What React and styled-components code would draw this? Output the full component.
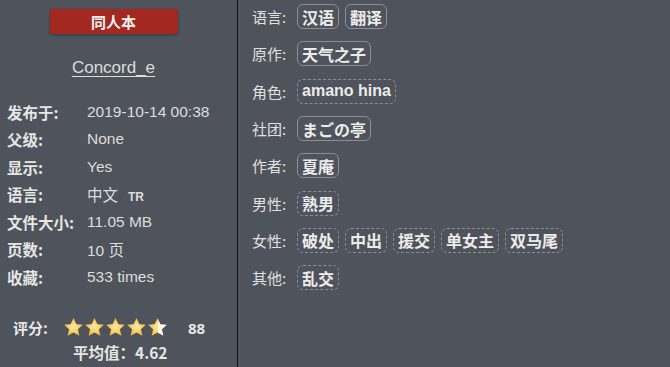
import React from "react";
import styled, { createGlobalStyle } from "styled-components";

const GlobalStyle = createGlobalStyle`
  html, body {
    margin: 0;
    padding: 0;
    background: #4f535b;
  }
  body {
    font-family: "Liberation Sans", "Noto Sans CJK SC", Arial, sans-serif;
    color: #dddddd;
  }
`;

const Page = styled.div`
  display: flex;
  width: 670px;
  height: 367px;
  background: #4f535b;
  overflow: hidden;
`;

const Side = styled.div`
  width: 227px;
  padding: 9px 10px 0 0;
  border-right: 1px solid #141414;
  display: flex;
  flex-direction: column;
  align-items: center;
`;

const Category = styled.div`
  width: 128px;
  height: 25px;
  background: #a3281f;
  border-radius: 2px;
  box-shadow: 0 1px 3px rgba(0, 0, 0, 0.35);
  display: flex;
  align-items: center;
  justify-content: center;
  color: #f2f2f2;
  font-weight: bold;
  font-size: 15px;
  font-family: "Noto Sans CJK SC", sans-serif;
`;

const Uploader = styled.a`
  margin-top: 24px;
  font-size: 17px;
  color: #dddddd;
  text-decoration: underline;
  text-underline-offset: 3px;
  font-family: "Liberation Sans", Arial, sans-serif;
`;

const InfoTable = styled.div`
  align-self: stretch;
  margin-top: 20px;
  padding-left: 7px;
  display: grid;
  grid-template-columns: 80px 1fr;
  grid-auto-rows: 27.5px;
  align-items: center;
`;

const InfoLabel = styled.div`
  font-size: 15.5px;
  font-weight: bold;
  color: #e6e6e6;
  font-family: "Noto Sans CJK SC", sans-serif;
`;

const InfoValue = styled.div`
  font-size: 15.5px;
  color: #dddddd;
  font-family: "Liberation Sans", "Noto Sans CJK SC", Arial, sans-serif;
  display: flex;
  align-items: baseline;
  gap: 10px;
`;

const Tr = styled.span`
  font-size: 12px;
  font-weight: bold;
`;

const Rating = styled.div`
  align-self: stretch;
  margin-top: 26px;
  padding-left: 13px;
  display: flex;
  flex-direction: column;
  gap: 2px;
`;

const RatingRow = styled.div`
  display: flex;
  align-items: center;
  height: 22px;
`;

const RatingLabel = styled.div`
  width: 50px;
  font-size: 15px;
  font-weight: bold;
  color: #e6e6e6;
  font-family: "Noto Sans CJK SC", sans-serif;
`;

const Stars = styled.div`
  display: flex;
`;

const Count = styled.div`
  margin-left: 20px;
  font-size: 15px;
  font-weight: bold;
  color: #e6e6e6;
  font-family: "Noto Sans", sans-serif;
`;

const Average = styled.div`
  margin-left: 60px;
  font-size: 15.5px;
  font-weight: bold;
  color: #e6e6e6;
  font-family: "Noto Sans CJK SC", sans-serif;
`;

const Main = styled.div`
  flex: 1;
  margin-top: -2px;
  padding-left: 14px;
  display: flex;
  flex-direction: column;
`;

const TagRow = styled.div`
  display: flex;
  align-items: center;
  height: 37.3px;
  flex-shrink: 0;
`;

const TagLabel = styled.div`
  width: 45px;
  font-size: 15px;
  color: #e0e0e0;
  font-family: "Noto Sans CJK SC", sans-serif;
`;

const Tags = styled.div`
  display: flex;
  gap: 6px;
`;

const Tag = styled.div`
  height: 23px;
  padding: 0 4px;
  border: 1px ${(p) => (p.$dashed ? "dashed" : "solid")} #8b8e94;
  border-radius: 6px;
  display: flex;
  align-items: center;
  font-size: 16px;
  font-weight: bold;
  color: #ececec;
  font-family: "Liberation Sans", "Noto Sans CJK SC", sans-serif;
`;

const starPath =
  "M12 1.2l3.2 7 7.5.7-5.7 5.1 1.7 7.5L12 17.6l-6.7 3.9 1.7-7.5L1.3 8.9l7.5-.7z";

const Star = ({ fill }) => {
  const id = `g${String(fill).replace(".", "")}`;
  return (
    <svg width="21" height="21" viewBox="0 0 24 24">
      <defs>
        <linearGradient id={id} x1="0" x2="1" y1="0" y2="0">
          <stop offset={fill} stopColor="#f4c041" />
          <stop offset={fill} stopColor="#ffffff" />
        </linearGradient>
        <radialGradient id="shine" cx="0.5" cy="0.5" r="0.45">
          <stop offset="0" stopColor="#fff3c0" stopOpacity="0.85" />
          <stop offset="1" stopColor="#fff3c0" stopOpacity="0" />
        </radialGradient>
      </defs>
      <path d={starPath} fill={`url(#${id})`} />
      <path d={starPath} fill="url(#shine)" />
    </svg>
  );
};

const info = [
  ["发布于:", "2019-10-14 00:38"],
  ["父级:", "None"],
  ["显示:", "Yes"],
  ["语言:", "中文"],
  ["文件大小:", "11.05 MB"],
  ["页数:", "10 页"],
  ["收藏:", "533 times"],
];

const tagGroups = [
  ["语言:", ["汉语", "翻译"], false],
  ["原作:", ["天气之子"], false],
  ["角色:", ["amano hina"], true],
  ["社团:", ["まごの亭"], false],
  ["作者:", ["夏庵"], false],
  ["男性:", ["熟男"], true],
  ["女性:", ["破处", "中出", "援交", "单女主", "双马尾"], true],
  ["其他:", ["乱交"], true],
];

export default function App() {
  return (
    <Page>
      <GlobalStyle />
      <Side>
        <Category>同人本</Category>
        <Uploader>Concord_e</Uploader>
        <InfoTable>
          {info.map(([label, value]) => (
            <React.Fragment key={label}>
              <InfoLabel>{label}</InfoLabel>
              <InfoValue>
                {value}
                {label === "语言:" && <Tr>TR</Tr>}
              </InfoValue>
            </React.Fragment>
          ))}
        </InfoTable>
        <Rating>
          <RatingRow>
            <RatingLabel>评分:</RatingLabel>
            <Stars>
              <Star fill={1} />
              <Star fill={1} />
              <Star fill={1} />
              <Star fill={1} />
              <Star fill={0.55} />
            </Stars>
            <Count>88</Count>
          </RatingRow>
          <Average>平均值：4.62</Average>
        </Rating>
      </Side>
      <Main>
        {tagGroups.map(([label, tags, dashed]) => (
          <TagRow key={label}>
            <TagLabel>{label}</TagLabel>
            <Tags>
              {tags.map((t) => (
                <Tag key={t} $dashed={dashed}>
                  {t}
                </Tag>
              ))}
            </Tags>
          </TagRow>
        ))}
      </Main>
    </Page>
  );
}
